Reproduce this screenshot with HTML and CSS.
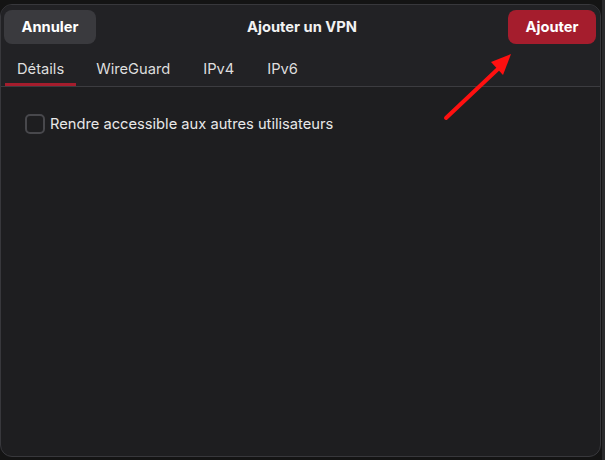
FILE: index.html
```html
<!DOCTYPE html>
<html lang="fr">
<head>
    <meta charset="UTF-8">
    <meta name="viewport" content="width=device-width, initial-scale=1.0">
    <title>Ajouter un VPN</title>
    <link rel="stylesheet" href="styles.css">
</head>
<body>
    <div class="backdrop">
        <div class="dialog">
            <header class="headerbar">
                <button class="btn btn-cancel">Annuler</button>
                <h1 class="title">Ajouter un VPN</h1>
                <button class="btn btn-add">Ajouter</button>
            </header>

            <nav class="tabs">
                <span class="tab active">Détails</span>
                <span class="tab">WireGuard</span>
                <span class="tab">IPv4</span>
                <span class="tab">IPv6</span>
            </nav>

            <div class="content">
                <label class="check-row">
                    <span class="checkbox"></span>
                    Rendre accessible aux autres utilisateurs
                </label>
            </div>
        </div>

        <!-- annotation arrow -->
        <svg class="arrow" width="80" height="75" viewBox="0 0 80 75">
            <line x1="5" y1="70" x2="58" y2="20" stroke="#ff1010" stroke-width="4" stroke-linecap="round"/>
            <polygon points="70,6 50,14 62,27" fill="#ff1010"/>
        </svg>
    </div>
</body>
</html>
```

FILE: styles.css
```css
body {
    margin: 0;
    background-color: #141414;
    font-family: 'Inter', 'Noto Sans', sans-serif;
    color: #ededed;
}

.backdrop {
    position: relative;
    width: 605px;
    height: 460px;
    overflow: hidden;
    background: linear-gradient(to right, #141414 602px, #2a2a2c 602px);
}

.dialog {
    margin: 4px 0 0 0;
    width: 601px;
    height: 453px;
    box-sizing: border-box;
    border: 1px solid #38383c;
    border-radius: 12px;
    background-color: #1e1e20;
    overflow: hidden;
    display: flex;
    flex-direction: column;
}

.headerbar {
    display: flex;
    align-items: center;
    justify-content: space-between;
    padding: 0 4px 0 3px;
    height: 43px;
    background-color: #222225;
}

.title {
    margin: 0;
    font-size: 14.7px;
    font-weight: 700;
    color: #f2f2f2;
}

.btn {
    font-family: inherit;
    font-size: 14.7px;
    font-weight: 700;
    color: #ffffff;
    border: none;
    border-radius: 8px;
    height: 34px;
    padding: 0 16px;
}

.btn-cancel {
    background-color: #3a3a3e;
    width: 92px;
}

.btn-add {
    background-color: #a51d2d;
    width: 88px;
}

.tabs {
    display: flex;
    padding-left: 4px;
    height: 38px;
    border-bottom: 1px solid #3c3c40;
    background-color: #222225;
}

.tab {
    display: flex;
    align-items: center;
    padding: 6px 12px 0 12px;
    font-size: 14.7px;
    color: #dedede;
    border-bottom: 3px solid transparent;
    margin-right: 9px;
}

.tab.active {
    margin-right: 8px;
    border-bottom-color: #a51d2d;
}

.content {
    flex: 1;
    padding: 27px 24px;
}

.check-row {
    display: flex;
    align-items: center;
    gap: 5px;
    font-size: 14.7px;
    color: #e8e8e8;
}

.checkbox {
    width: 16px;
    height: 16px;
    border: 2px solid #48484c;
    border-radius: 5px;
}

.arrow {
    position: absolute;
    left: 441px;
    top: 48px;
}
```
